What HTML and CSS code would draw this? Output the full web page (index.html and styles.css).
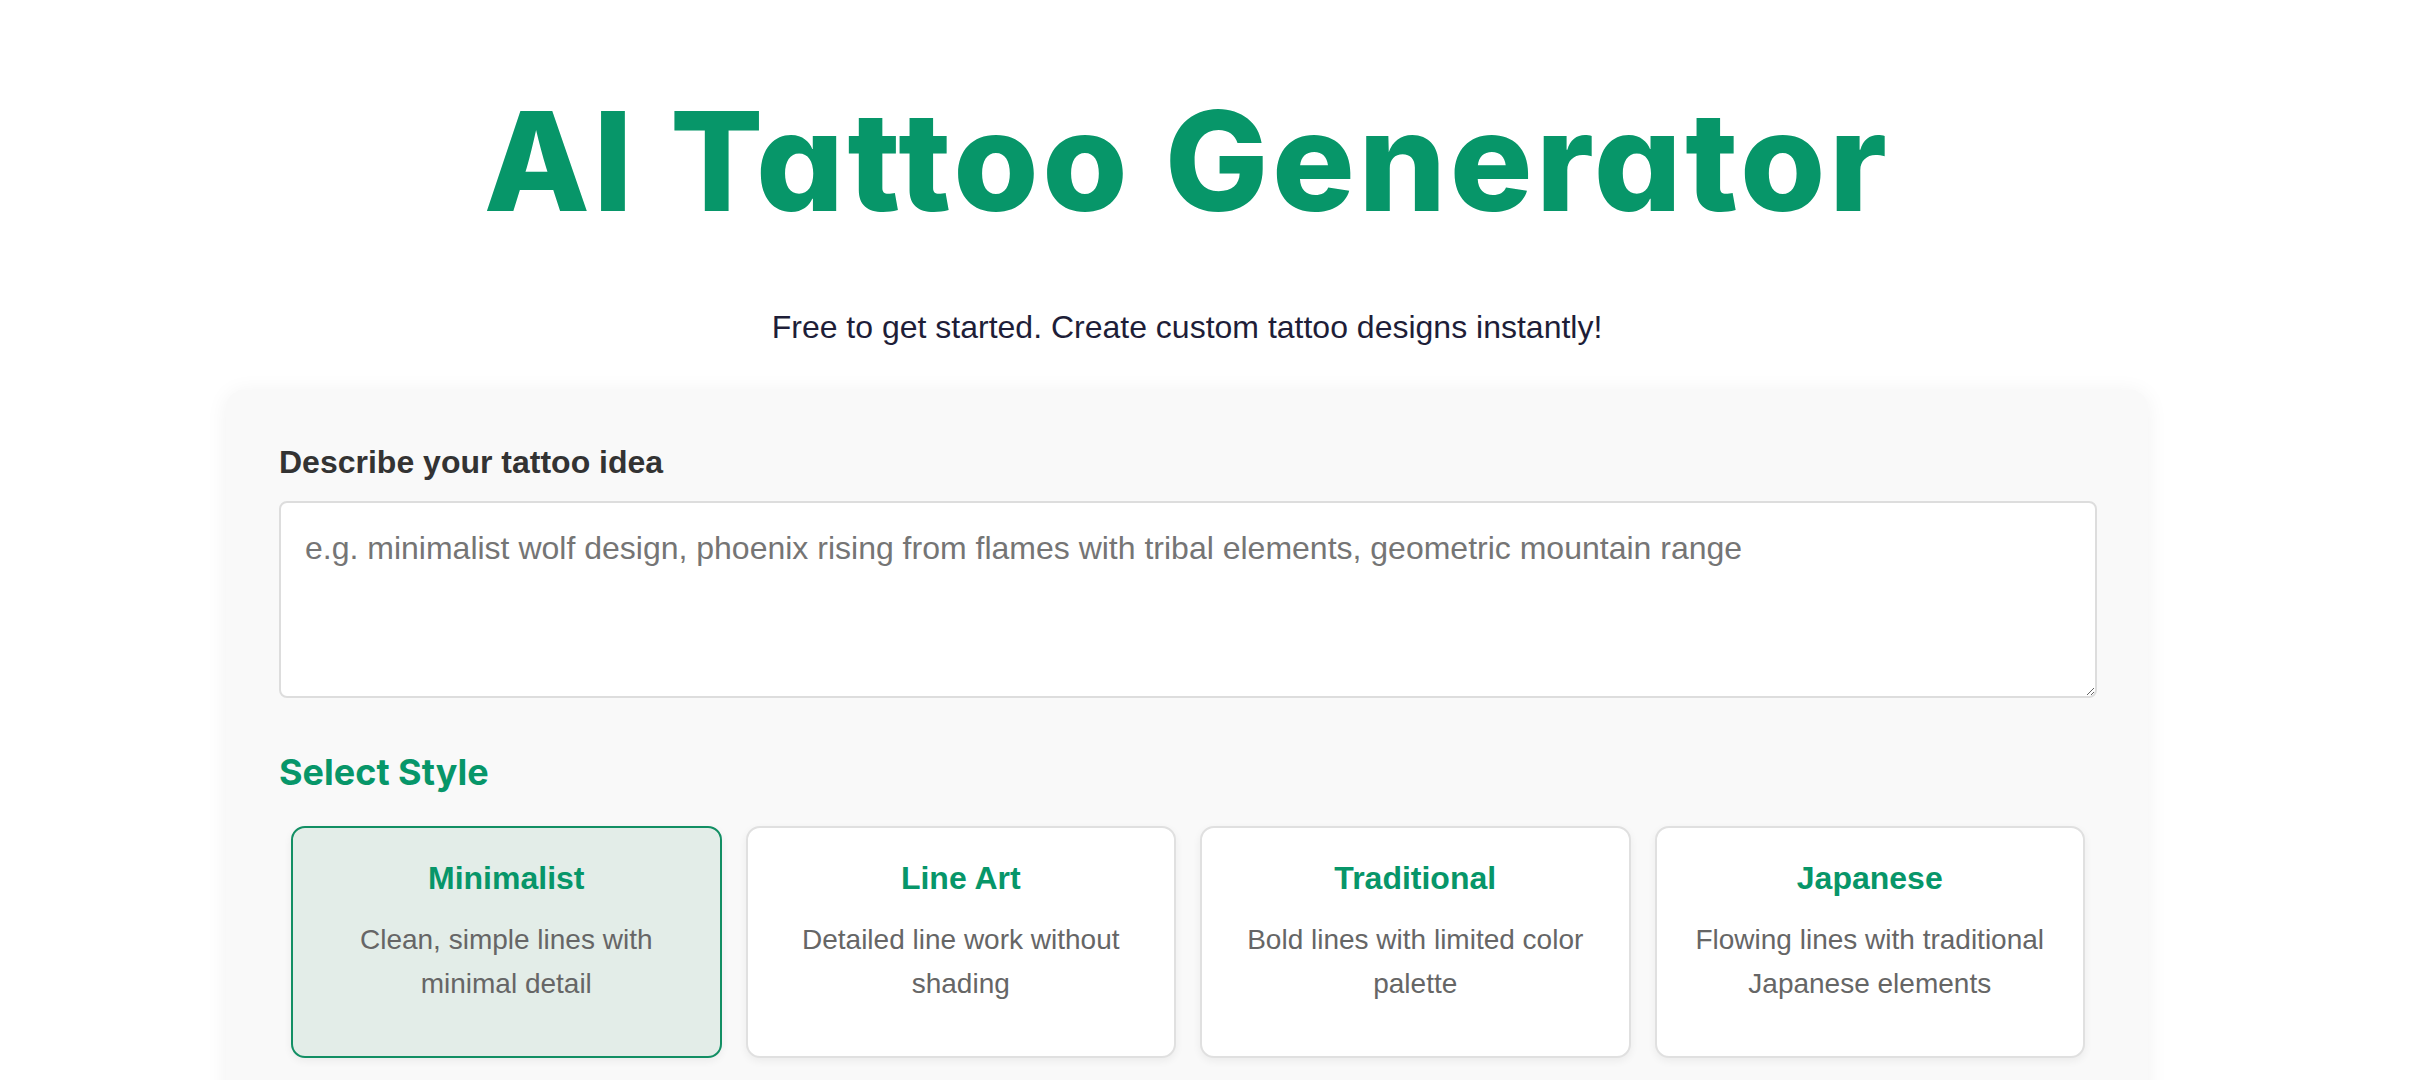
FILE: index.html
```html
<!DOCTYPE html>
<html lang="en">
<head>
<meta charset="utf-8">
<title>AI Tattoo Generator</title>
<link rel="stylesheet" href="styles.css">
</head>
<body>
<main class="page">
  <header class="hero">
    <h1 class="title">AI Tattoo Generator</h1>
    <p class="subtitle">Free to get started. Create custom tattoo designs instantly!</p>
  </header>
  <section class="panel">
    <label class="label" for="idea">Describe your tattoo idea</label>
    <textarea id="idea" class="idea" placeholder="e.g. minimalist wolf design, phoenix rising from flames with tribal elements, geometric mountain range"></textarea>
    <h2 class="section-title">Select Style</h2>
    <div class="styles">
      <div class="style-card selected">
        <h3 class="style-name">Minimalist</h3>
        <p class="style-desc">Clean, simple lines with minimal detail</p>
      </div>
      <div class="style-card">
        <h3 class="style-name">Line Art</h3>
        <p class="style-desc">Detailed line work without shading</p>
      </div>
      <div class="style-card">
        <h3 class="style-name">Traditional</h3>
        <p class="style-desc">Bold lines with limited color palette</p>
      </div>
      <div class="style-card">
        <h3 class="style-name">Japanese</h3>
        <p class="style-desc">Flowing lines with traditional Japanese elements</p>
      </div>
    </div>
  </section>
</main>
</body>
</html>
```

FILE: styles.css
```css
* { box-sizing: border-box; }
html, body { margin: 0; padding: 0; background: #ffffff; }
body {
  font-family: "Liberation Sans", Arial, sans-serif;
  color: #333333;
}
.page {
  width: 1922px;
  margin-left: 226px;
}
.hero {
  text-align: center;
  padding-top: 81px;
}
.title {
  margin: 0;
  font-family: Inter, "Noto Sans", sans-serif;
  font-weight: 800;
  font-size: 138px;
  line-height: 160px;
  color: #079669;
  font-feature-settings: "cv11" 1;
  letter-spacing: 3.5px;
}
.subtitle {
  margin: 68px 0 0;
  font-size: 32px;
  line-height: 36px;
  color: #1e1e38;
}
.panel {
  margin-top: 45px;
  background: #f9f9f9;
  border-radius: 18px;
  box-shadow: 0 2px 22px rgba(0, 0, 0, 0.06);
  padding: 52px 51px 200px 53px;
}
.label {
  display: block;
  font-weight: 700;
  font-size: 32px;
  line-height: 40px;
  color: #333333;
  margin-bottom: 19px;
}
.idea {
  display: block;
  width: 100%;
  height: 197px;
  border: 2px solid #dddddd;
  border-radius: 8px;
  background: #ffffff;
  padding: 20px 24px;
  font-family: "Liberation Sans", Arial, sans-serif;
  font-size: 32px;
  line-height: 1.6;
  color: #333333;
  resize: vertical;
}
.idea::placeholder { color: #757575; }
.section-title {
  margin: 52px 0 0;
  font-family: Inter, "Noto Sans", sans-serif;
  font-weight: 700;
  font-size: 36px;
  line-height: 44px;
  color: #079669;
}
.styles {
  display: grid;
  grid-template-columns: repeat(4, 1fr);
  gap: 24px;
  padding: 0 12px;
  margin-top: 32px;
}
.style-card {
  height: 232px;
  background: #ffffff;
  border: 2px solid #e0e0e0;
  border-radius: 14px;
  box-shadow: 0 3px 8px rgba(0, 0, 0, 0.06);
  text-align: center;
  padding: 32px 30px 20px;
}
.style-card.selected {
  background: #e3ede8;
  border-color: #128f64;
}
.style-name {
  margin: 0 0 22px;
  font-size: 32px;
  line-height: 36px;
  font-weight: 700;
  color: #079669;
}
.style-desc {
  margin: 0;
  font-size: 28px;
  line-height: 44px;
  color: #666666;
}
```
